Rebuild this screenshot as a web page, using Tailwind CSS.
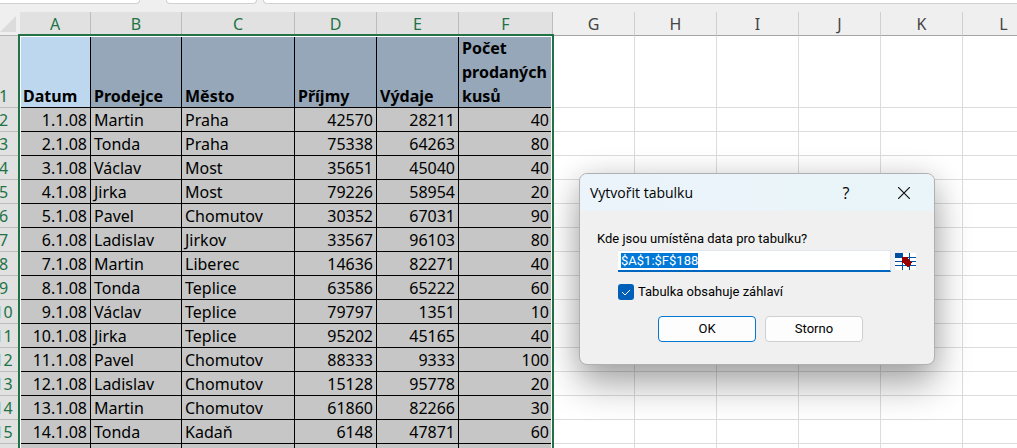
<!DOCTYPE html>
<html lang="cs">
<head>
<meta charset="utf-8">
<title>Vytvořit tabulku</title>
<script src="https://cdn.jsdelivr.net/npm/@tailwindcss/browser@4"></script>
</head>
<body class="relative h-screen overflow-hidden bg-[#efefef] text-black">

<!-- lower edge of the formula bar -->
<div class="flex h-3 items-start">
  <div class="h-1 w-[140px] rounded-br-sm border-r border-b border-[#d1d1d1] bg-white"></div>
  <div class="ml-[26px] h-1 w-[91px] rounded-b-sm border-x border-b border-[#d1d1d1] bg-white"></div>
  <div class="ml-[6px] h-1 flex-1 rounded-bl-sm border-b border-l border-[#d1d1d1] bg-white"></div>
</div>

<main class="relative bg-white">
  <table class="-ml-3 w-[1057px] min-w-[calc(100%+12px)] table-fixed border-separate border-spacing-0 font-['Noto_Sans',sans-serif] text-base leading-[21px]">
    <colgroup>
      <col class="w-[32px]"><col class="w-[71px]"><col class="w-[91px]"><col class="w-[113px]"><col class="w-[82px]"><col class="w-[82px]"><col class="w-[94px]"><col class="w-[82px]"><col class="w-[82px]"><col class="w-[82px]"><col class="w-[82px]"><col class="w-[82px]"><col class="w-[82px]">
    </colgroup>
    <thead>
      <tr id="letters" class="h-6"></tr>
    </thead>
    <tbody id="rows"></tbody>
  </table>
  <!-- selection frame -->
  <div class="pointer-events-none absolute top-[22px] -bottom-4 left-[18px] w-[536px] border-2 border-[#217346] inset-ring inset-ring-white"></div>
</main>

<div role="dialog" aria-labelledby="dlg-title" class="absolute top-[173px] left-[579px] w-[356px] overflow-hidden rounded-lg border border-[#b0b0b0] bg-[#f0f0f0] pb-[22px] font-[Roboto,sans-serif] text-[13px] shadow-[0_20px_36px_rgba(0,0,0,0.32),0_0_28px_rgba(0,0,0,0.12)]">
  <header class="flex h-[37px] items-center bg-linear-to-r from-[#ebf3fb] to-[#e9f5f8] pl-[10px]">
    <h1 id="dlg-title" class="flex-1 font-['Open_Sans',sans-serif] text-sm">Vytvořit tabulku</h1>
    <button type="button" aria-label="Nápověda" class="flex h-full w-12 items-center justify-center font-['Open_Sans',sans-serif] text-base">?</button>
    <button type="button" aria-label="Zavřít" class="ml-1 flex h-full w-[60px] items-center justify-center">
      <svg class="size-3" viewBox="0 0 12 12" fill="none" stroke="#111" stroke-width="1.2"><path d="M0 0l12 12M12 0L0 12"/></svg>
    </button>
  </header>
  <form class="pt-[18px] pr-[18px] pl-[17px]" onsubmit="return false">
    <label for="range" class="block h-5 leading-5">Kde jsou umístěna data pro tabulku?</label>
    <div class="mt-px flex items-center gap-1 pl-[21px]">
      <input id="range" type="text" value="$A$1:$F$188" class="h-[22px] min-w-0 flex-1 border-t border-r border-b-2 border-[#e3e8ee] border-b-[#0067c0] bg-white px-[3px] leading-4 outline-none selection:bg-[#0078d7] selection:text-white">
      <button type="button" aria-label="Vybrat oblast" class="flex">
        <svg class="h-[17px] w-[21px]" viewBox="0 0 21 17" shape-rendering="crispEdges">
          <path fill="#fff" d="M0 0h21v17H0z"/>
          <path fill="#0050a0" d="M0 0h8v5H0zM7 0h1v17H7zM14 0h1v17h-1zM0 4h21v1H0zM0 8h21v1H0zM0 12h21v1H0z"/>
          <path fill="#980000" d="M7 4h6v2h1v1h1v1h1v1h1v1h-1v2h-1v1h-1v1h-2v-1h-1v-1h-1v-1H9v-1H7z"/>
        </svg>
      </button>
    </div>
    <div class="mt-[10px] flex h-5 items-center gap-1 pl-[21px]">
      <span class="grid">
        <input id="headers" type="checkbox" checked class="col-start-1 row-start-1 size-4 appearance-none rounded-[3px] bg-[#005fb8]">
        <svg class="pointer-events-none col-start-1 row-start-1 size-4" viewBox="0 0 16 16" fill="none" stroke="#fff" stroke-width="1"><path d="M4 8l3 3 5-5"/></svg>
      </span>
      <label for="headers">Tabulka obsahuje záhlaví</label>
    </div>
    <div class="mt-[14px] flex justify-center gap-[9px] pl-2">
      <button type="submit" class="h-[26px] w-[98px] rounded border border-[#0078d4] bg-[#fdfdfd]">OK</button>
      <button type="button" class="h-[26px] w-[98px] rounded border border-[#d0d0d0] bg-[#fdfdfd]">Storno</button>
    </div>
  </form>
</div>

<script>
const data = [
  ['1.1.08','Martin','Praha',42570,28211,40],
  ['2.1.08','Tonda','Praha',75338,64263,80],
  ['3.1.08','Václav','Most',35651,45040,40],
  ['4.1.08','Jirka','Most',79226,58954,20],
  ['5.1.08','Pavel','Chomutov',30352,67031,90],
  ['6.1.08','Ladislav','Jirkov',33567,96103,80],
  ['7.1.08','Martin','Liberec',14636,82271,40],
  ['8.1.08','Tonda','Teplice',63586,65222,60],
  ['9.1.08','Václav','Teplice',79797,1351,10],
  ['10.1.08','Jirka','Teplice',95202,45165,40],
  ['11.1.08','Pavel','Chomutov',88333,9333,100],
  ['12.1.08','Ladislav','Chomutov',15128,95778,20],
  ['13.1.08','Martin','Chomutov',61860,82266,30],
  ['14.1.08','Tonda','Kadaň',6148,47871,60],
  ['','','','','',''],
];
const titles = ['Datum','Prodejce','Město','Příjmy','Výdaje','Počet prodaných kusů'];

let head = `<td class="border-b border-[#b4b4b4] bg-[#efefef] p-0"><svg class="ml-3 block h-[23px] w-[17px]" viewBox="0 0 17 23"><path fill="#dcdcdc" d="M16 4v16H0z"/></svg></td>`;
'ABCDEFGHIJKL'.split('').forEach((c, i) => {
  head += i < 6
    ? `<th scope="col" class="border-r border-b border-[#bdbdbd] bg-[#e1e1e1] p-0 pt-[2px] text-center font-normal text-[#217346]">${c}</th>`
    : `<th scope="col" class="border-r border-b border-r-[#d0d0d0] border-b-[#a5a5a5] bg-[#efefef] p-0 pt-[2px] text-center font-normal text-[#444]">${c}</th>`;
});
document.getElementById('letters').innerHTML = head;

const empty = '<td class="border-r border-b border-[#dcdcdc] p-0"></td>'.repeat(6);
const number = n => `<th scope="row" class="border-b border-[#bdbdbd] bg-[#e1e1e1] p-0 pt-[2px] pr-px text-center align-bottom font-normal text-[#217346]">${n}</th>`;
let body = `<tr class="h-[72px]">${number(1)}`;
titles.forEach((t, i) => {
  body += i === 0
    ? `<td class="border-r border-b border-black bg-[#bdd7ee] p-0 pl-[3px] align-bottom leading-6 font-bold"><div class="-mb-px">${t}</div></td>`
    : `<td class="border-r border-b border-black bg-[#95a7b8] p-0 pl-[3px] align-bottom leading-6 font-bold"><div class="-mb-px">${t}</div></td>`;
});
body += empty + '</tr>';
data.forEach((r, k) => {
  body += `<tr class="h-6">${number(k + 2)}`;
  r.forEach((v, i) => {
    body += (i === 1 || i === 2)
      ? `<td class="border-r border-b border-black bg-[#c6c6c6] p-0 pt-[2px] pl-[3px]">${v}</td>`
      : `<td class="border-r border-b border-black bg-[#c6c6c6] p-0 pt-[2px] pr-[3px] text-right">${v}</td>`;
  });
  body += empty + '</tr>';
});
document.getElementById('rows').innerHTML = body;

const range = document.getElementById('range');
range.focus();
range.select();
</script>
</body>
</html>
